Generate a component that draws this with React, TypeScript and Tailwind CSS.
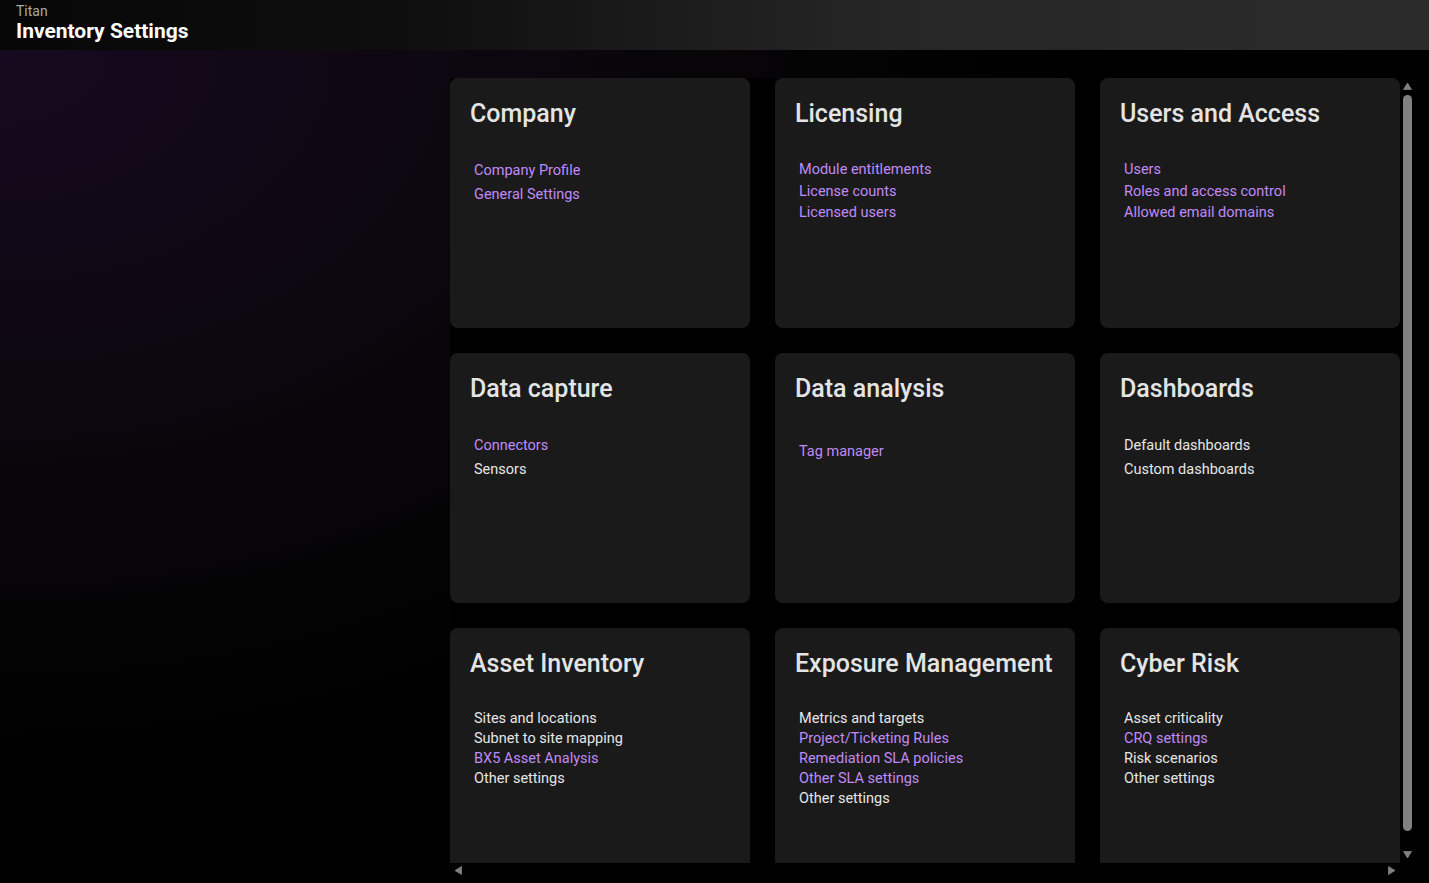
import React from "react";

type Item = { label: string; link: boolean };
type Card = { title: string; lead: string; items: Item[] };

const L = (label: string): Item => ({ label, link: true });
const P = (label: string): Item => ({ label, link: false });

const cards: Card[] = [
  { title: "Company", lead: "leading-[24px]", items: [L("Company Profile"), L("General Settings")] },
  { title: "Licensing", lead: "leading-[21.5px]", items: [L("Module entitlements"), L("License counts"), L("Licensed users")] },
  { title: "Users and Access", lead: "leading-[21.5px]", items: [L("Users"), L("Roles and access control"), L("Allowed email domains")] },
  { title: "Data capture", lead: "leading-[24px]", items: [L("Connectors"), P("Sensors")] },
  { title: "Data analysis", lead: "leading-[36px]", items: [L("Tag manager")] },
  { title: "Dashboards", lead: "leading-[24px]", items: [P("Default dashboards"), P("Custom dashboards")] },
  { title: "Asset Inventory", lead: "leading-[20px]", items: [P("Sites and locations"), P("Subnet to site mapping"), L("BX5 Asset Analysis"), P("Other settings")] },
  { title: "Exposure Management", lead: "leading-[20px]", items: [P("Metrics and targets"), L("Project/Ticketing Rules"), L("Remediation SLA policies"), L("Other SLA settings"), P("Other settings")] },
  { title: "Cyber Risk", lead: "leading-[20px]", items: [P("Asset criticality"), L("CRQ settings"), P("Risk scenarios"), P("Other settings")] },
];

function Tri({ dir }: { dir: "up" | "down" | "left" | "right" }) {
  const pts = {
    up: "0.5,7.5 4.5,1 8.5,7.5",
    down: "0.5,1.5 8.5,1.5 4.5,8",
    left: "7.5,0.5 7.5,8.5 1,4.5",
    right: "1.5,0.5 1.5,8.5 8,4.5",
  }[dir];
  return (
    <svg width="9" height="9" viewBox="0 0 9 9" className="block">
      <polygon points={pts} fill="#808080" strokeLinejoin="round" stroke="#808080" strokeWidth="0.8" />
    </svg>
  );
}

export default function App() {
  return (
    <div className="w-[1429px] h-[883px] overflow-hidden flex flex-col bg-black font-['Roboto','Liberation_Sans',sans-serif]">
      <header className="h-[50px] shrink-0 px-4 pt-[3px] bg-[linear-gradient(to_right,#070707_0%,#0e0e0e_28%,#262626_62%,#2b2b2b_100%)]">
        <div className="text-[14px] leading-[16px] text-[#a8a8a8]">Titan</div>
        <div className="text-[21px] leading-[24px] font-bold text-white">Inventory Settings</div>
      </header>
      <main className="flex-1 min-h-0 flex pl-[450px] pt-[28px] pr-[14px] pb-[5px] bg-[radial-gradient(ellipse_75%_90%_at_0%_0%,#170a20_0%,#0c070f_45%,#050405_75%,#000_100%)]">
        <div className="w-[965px] flex flex-col bg-black">
          <div className="flex flex-1 min-h-0">
            <div className="w-[950px] overflow-hidden">
              <div className="grid grid-cols-[300px_300px_300px] auto-rows-[250px] gap-[25px]">
                {cards.map((c) => (
                  <div key={c.title} className="rounded-lg bg-[#1a1a1a] px-5 pt-[19px]">
                    <h2 className="text-[25px] leading-[33px] font-medium text-[#e4e4e4] whitespace-nowrap">{c.title}</h2>
                    <ul className="mt-[29px] pl-1">
                      {c.items.map((it) => (
                        <li
                          key={it.label}
                          className={`text-[14.5px] ${c.lead} ${it.link ? "text-[#c08af7]" : "text-[#e6e6e6]"}`}
                        >
                          {it.label}
                        </li>
                      ))}
                    </ul>
                  </div>
                ))}
              </div>
            </div>
            <div className="w-[15px] flex flex-col items-center">
              <div className="h-[17px] flex items-center justify-center"><Tri dir="up" /></div>
              <div className="w-[9px] h-[736px] rounded-full bg-[#808080]" />
              <div className="flex-1 flex items-end justify-center pb-[4px]"><Tri dir="down" /></div>
            </div>
          </div>
          <div className="h-[15px] flex items-center">
            <div className="w-[950px] flex items-center justify-between px-[4px]">
              <Tri dir="left" />
              <Tri dir="right" />
            </div>
          </div>
        </div>
      </main>
    </div>
  );
}
